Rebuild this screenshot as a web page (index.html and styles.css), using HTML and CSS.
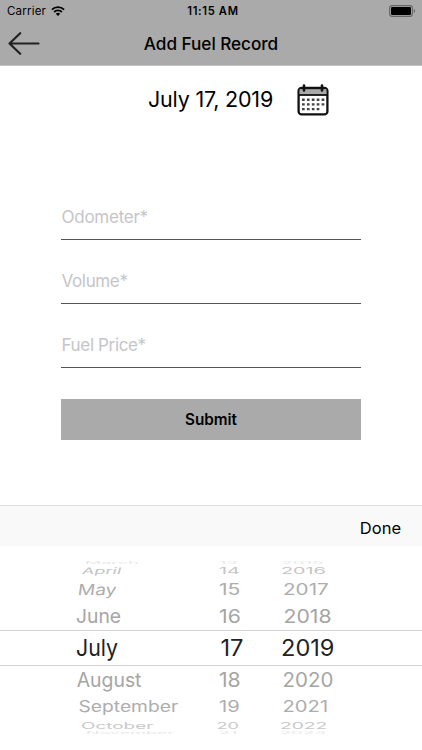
FILE: index.html
```html
<!DOCTYPE html>
<html lang="en">
<head>
<meta charset="utf-8">
<title>Add Fuel Record</title>
<link rel="stylesheet" href="styles.css">
</head>
<body>
<header class="top">
  <div class="status">
    <div class="carrier"><span>Carrier</span>
      <svg class="wifi" viewBox="0 0 14 10"><path d="M.9 3.7a8.7 8.7 0 0 1 12.2 0M3.1 6a5.6 5.6 0 0 1 7.8 0" fill="none" stroke="#000" stroke-width="1.8"/><path d="M7 10 4.8 7.8a3.2 3.2 0 0 1 4.4 0z"/></svg>
    </div>
    <span class="time">11:15 AM</span>
    <svg class="battery" viewBox="0 0 27 12"><rect x=".6" y=".6" width="22.8" height="10.8" rx="2.6" fill="none" stroke="#666" stroke-width="1.1"/><rect x="2" y="2" width="20" height="8" rx="1.2"/><path d="M24.8 4v4c1.8-.7 1.8-3.3 0-4z" fill="#666"/></svg>
  </div>
  <div class="nav">
    <svg class="back" viewBox="0 0 32 24"><path d="M12.2 1.2 1.5 11.5l10.7 10.3M1.5 11.5h29" fill="none" stroke="#222" stroke-width="2.2" stroke-linecap="round" stroke-linejoin="round"/></svg>
    <h1>Add Fuel Record</h1>
  </div>
</header>
<main>
  <div class="date">
    <span class="date-text">July 17, 2019</span>
    <svg class="calendar" viewBox="0 0 32 32"><rect x="1.6" y="4" width="28.8" height="26.4" rx="3" fill="#fff" stroke="#111" stroke-width="2.3"/><path d="M2.7 5h26.6v6H2.7z" fill="#aaa"/><path d="M1.5 11h29" stroke="#111" stroke-width="1.8"/><path d="M4 4.2h24" stroke="#111" stroke-width="2"/><path d="M7 1.5v5M25 1.5v5" stroke="#111" stroke-width="2.6" stroke-linecap="round"/><path d="M5 15.7h23M5 20.4h23M5 25.1h18" stroke="#444" stroke-width="2.4" stroke-dasharray="2.7 2.2"/></svg>
  </div>
  <form class="form">
    <div class="field"><span class="f-odo">Odometer*</span></div>
    <div class="field"><span class="f-vol">Volume*</span></div>
    <div class="field"><span class="f-price">Fuel Price*</span></div>
    <button type="button" class="submit">Submit</button>
  </form>
</main>
<section class="sheet">
  <div class="toolbar"><span>Done</span></div>
  <div class="wheel">
    <div class="row edge-top"><span class="m">March</span><span class="d">13</span><span class="y">2015</span></div>
    <div class="row up3"><span class="m">April</span><span class="d">14</span><span class="y">2016</span></div>
    <div class="row up2"><span class="m">May</span><span class="d">15</span><span class="y">2017</span></div>
    <div class="row up1"><span class="m">June</span><span class="d">16</span><span class="y">2018</span></div>
    <div class="row selected"><span class="m">July</span><span class="d">17</span><span class="y">2019</span></div>
    <div class="row down1"><span class="m">August</span><span class="d">18</span><span class="y">2020</span></div>
    <div class="row down2"><span class="m">September</span><span class="d">19</span><span class="y">2021</span></div>
    <div class="row down3"><span class="m">October</span><span class="d">20</span><span class="y">2022</span></div>
    <div class="row edge-bottom"><span class="m">November</span><span class="d">21</span><span class="y">2023</span></div>
  </div>
</section>
</body>
</html>
```
FILE: styles.css
```css
* { box-sizing: border-box; }
body { margin: 0; width: 422px; height: 750px; overflow: hidden; background: #fff; color: #000; font-family: Inter, "Liberation Sans", sans-serif; display: flex; flex-direction: column; }
svg { display: block; }
.top { height: 66px; background: #aaa; border-bottom: 1px solid #c4c4c4; }
.status { height: 22px; padding: 0 6px 0 7px; display: grid; grid-template-columns: 1fr auto 1fr; align-items: center; font-size: 11.5px; }
.carrier { display: flex; align-items: center; gap: 5px; letter-spacing: .2px; }
.wifi { width: 14px; height: 10px; }
.time { font-weight: 600; font-size: 11.2px; letter-spacing: .65px; margin-left: 3px; }
.battery { width: 27px; height: 12px; justify-self: end; }
.nav { height: 43px; padding: 0 8px; display: grid; grid-template-columns: 32px 1fr 32px; align-items: center; }
.back { width: 32px; height: 24px; }
h1 { margin: 0; font-size: 17.2px; font-weight: 500; text-align: center; letter-spacing: -.05px; }
main { height: 439px; }
.date { height: 68px; padding-left: 148px; display: flex; align-items: center; }
.date-text { width: 149px; font-size: 21.5px; letter-spacing: -.2px; white-space: nowrap; margin-top: -2px; }
.calendar { width: 32px; height: 32px; }
.form { width: 300px; margin: 58px 0 0 61px; }
.field { height: 64px; padding: 12px 0 0 .5px; border-bottom: 1px solid #555; color: #c5c5c9; font-size: 17px; line-height: 26px; }
.field:first-child { height: 48px; }
.field:not(:first-child) { padding-top: 28px; }
.f-odo { letter-spacing: -.25px; }
.f-vol, .f-price { letter-spacing: -.35px; }
.submit { display: block; width: 300px; height: 41px; margin-top: 31px; padding: 0; border: 0; background: #aaa; font: 600 15.3px Inter, sans-serif; color: #000; }
.sheet { flex: 1; }
.toolbar { height: 41px; padding: 4px 21px 0 0; background: #f9f9f9; border-top: 1px solid #dcdcde; display: flex; align-items: center; justify-content: flex-end; font-size: 16.5px; }
.wheel { padding-top: 15px; }

/* Rows flatten and fade toward the rim of the wheel:
   --sm, --sd, --sy stretch the month, day and year; --om, --od, --oy shift them. */
.row { display: grid; grid-template-columns: 143px 62px 1fr; grid-template-rows: 100%; padding-left: 76px; align-items: center; line-height: 1.2; color: #a5a5a5; --v: 1px; }
.row span { justify-self: start; white-space: nowrap; transform-origin: left center; }
.m { transform: translate(var(--om, 0px), var(--v)) scaleX(var(--sm, 1)) skewX(var(--k, 0deg)); }
.d { transform: translate(var(--od, 0px), var(--v)) scaleX(var(--sd, 1)); }
.y { transform: translate(var(--oy, 0px), var(--v)) scaleX(var(--sy, 1)); }
.edge-top { height: 3px; font-size: 3px; color: #e6e6e6; --sm: 6; --sd: 6; --sy: 6.3; --om: 9px; }
.up3 { height: 13px; font-size: 9px; color: #c4c4c4; --sm: 2; --sd: 2.2; --sy: 2.2; --om: 6px; --k: -8deg; }
.up2 { height: 25px; font-size: 15.2px; color: #adadad; --sm: 1.26; --sd: 1.39; --sy: 1.36; --om: 2px; --oy: 2px; --k: -6deg; }
.up1 { height: 28px; font-size: 19.3px; --sd: 1.1; --sy: 1.1; --oy: 2.5px; }
.selected { height: 36px; font-size: 22.7px; color: #222; border: solid #d2d2d2; border-width: 1px 0; --sm: .94; --sd: 1.04; --sy: 1.04; --od: 1.5px; --v: 0px; }
.down1 { height: 28px; font-size: 19.8px; --sm: .98; --sd: 1.07; --sy: 1.035; --om: .7px; --oy: 1.5px; }
.down2 { height: 25px; font-size: 15.2px; color: #adadad; --sm: 1.265; --sd: 1.33; --sy: 1.33; --om: 2.5px; --oy: 1.5px; }
.down3 { height: 12px; font-size: 8.6px; color: #c8c8c8; --sm: 2.2; --sd: 2.1; --sy: 2.23; --om: 5px; --od: -2.5px; --oy: -1px; }
.edge-bottom { height: 4px; font-size: 3px; color: #e6e6e6; --sm: 6; --sd: 6; --sy: 6.2; --om: 10px; --oy: -1px; }
```
